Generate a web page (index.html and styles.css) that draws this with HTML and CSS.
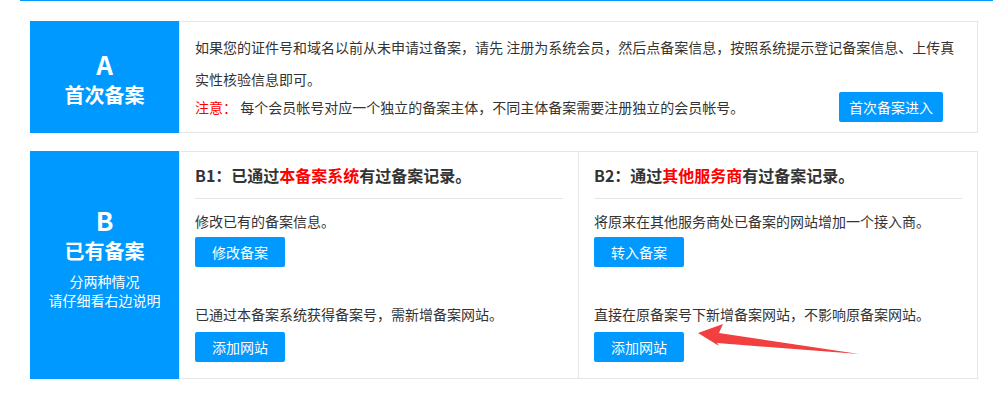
FILE: index.html
```html
<!DOCTYPE html>
<html>
<link rel="stylesheet" href="styles.css">

<head>
</head>

<body>
    <div class="page">
        <div class="top-line"></div>
        <div class="wrap">
            <!-- A: first time -->
            <div class="panel panel-a">
                <div class="side side-a">
                    <div class="side-letter">A</div>
                    <div class="side-title">首次备案</div>
                </div>
                <div class="panel-body body-a">
                    <p class="intro">如果您的证件号和域名以前从未申请过备案，请先 注册为系统会员，然后点备案信息，按照系统提示登记备案信息、上传真实性核验信息即可。</p>
                    <div class="note-row">
                        <span class="note"><span class="red">注意：</span> 每个会员帐号对应一个独立的备案主体，不同主体备案需要注册独立的会员帐号。</span>
                        <a href="#" class="btn">首次备案进入</a>
                    </div>
                </div>
            </div>

            <!-- B: already filed -->
            <div class="panel panel-b">
                <div class="side side-b">
                    <div class="side-letter">B</div>
                    <div class="side-title">已有备案</div>
                    <div class="side-sub">分两种情况<br>请仔细看右边说明</div>
                </div>
                <div class="panel-body body-b">
                    <div class="col col-left">
                        <h3>B1：已通过<span class="red">本备案系统</span>有过备案记录。</h3>
                        <p class="desc">修改已有的备案信息。</p>
                        <a href="#" class="btn">修改备案</a>
                        <p class="desc desc-second">已通过本备案系统获得备案号，需新增备案网站。</p>
                        <a href="#" class="btn">添加网站</a>
                    </div>
                    <div class="col">
                        <h3>B2：通过<span class="red">其他服务商</span>有过备案记录。</h3>
                        <p class="desc">将原来在其他服务商处已备案的网站增加一个接入商。</p>
                        <a href="#" class="btn">转入备案</a>
                        <p class="desc desc-second">直接在原备案号下新增备案网站，不影响原备案网站。</p>
                        <a href="#" class="btn">添加网站</a>
                    </div>
                </div>
            </div>
        </div>

        <!-- annotation arrow drawn over the page -->
        <svg class="arrow" width="993" height="394" viewBox="0 0 993 394">
            <polygon points="698,333 723,324 719,333 859,354 717,343 719,346" fill="#f23f3f" />
        </svg>
    </div>
</body>

</html>
```

FILE: styles.css
```css
    body {
        margin: 0;
        background-color: #ffffff;
        color: #333333;
        font-family: "Noto Sans CJK SC", "Noto Sans", sans-serif;
        font-size: 14px;
    }

    .page {
        position: relative;
        width: 993px;
        height: 394px;
        overflow: hidden;
    }

    .top-line {
        margin-left: 20px;
        border-top: 1px solid #0099ff;
    }

    .wrap {
        margin: 20px 15px 0 30px;
    }

    .panel {
        display: flex;
    }
    .panel-b {
        margin-top: 18px;
    }

    .side {
        width: 149px;
        flex-shrink: 0;
        background-color: #0099ff;
        color: #ffffff;
        display: flex;
        flex-direction: column;
        align-items: center;
        justify-content: center;
        text-align: center;
    }
    .side-a {
        padding-top: 3px;
    }
    .side-b {
        padding-bottom: 16px;
    }

    .side-letter {
        font-size: 26px;
        font-weight: bold;
        line-height: 31px;
    }
    .side-title {
        font-size: 20px;
        font-weight: bold;
        line-height: 31px;
    }
    .side-sub {
        margin-top: 6px;
        font-size: 14px;
        line-height: 19px;
    }

    .panel-body {
        flex-grow: 1;
        border: 1px solid #e6e6e6;
    }

    .body-a {
        padding: 9px 15px 10px 15px;
    }

    .intro {
        margin: 0;
        line-height: 32px;
    }

    .note-row {
        display: flex;
        align-items: center;
        justify-content: space-between;
        margin-top: -3px;
        height: 30px;
    }
    .note {
        line-height: 24px;
    }

    .red {
        color: #ff0000;
    }

    .btn {
        display: inline-block;
        min-width: 90px;
        box-sizing: border-box;
        height: 30px;
        line-height: 30px;
        padding: 0 10px;
        background-color: #0099ff;
        color: #ffffff;
        border-radius: 2px;
        text-align: center;
        text-decoration: none;
    }
    .note-row .btn {
        margin-right: 19px;
    }

    .body-b {
        display: flex;
    }

    .col {
        flex: 1;
        padding: 0 15px 16px 15px;
    }
    .col-left {
        border-right: 1px solid #e6e6e6;
    }

    .col h3 {
        margin: 0;
        padding: 11px 0;
        font-size: 16px;
        line-height: 24px;
        border-bottom: 1px solid #e6e6e6;
    }

    .desc {
        margin: 10px 0 4px 0;
        line-height: 24px;
    }
    .desc-second {
        margin-top: 35px;
        margin-bottom: 6px;
    }

    .arrow {
        position: absolute;
        left: 0;
        top: 0;
        pointer-events: none;
    }
```
